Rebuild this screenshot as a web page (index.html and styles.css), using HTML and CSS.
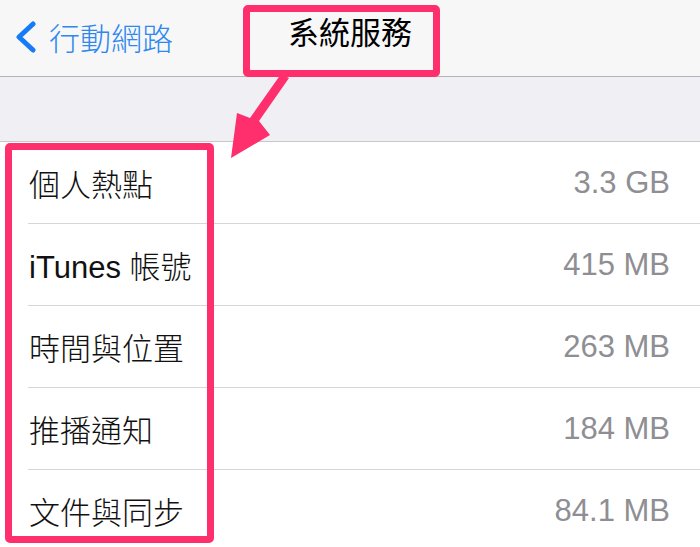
FILE: index.html
```html
<!DOCTYPE html>
<html lang="zh-Hant">
<head>
<meta charset="utf-8">
<title>系統服務</title>
<link rel="stylesheet" href="styles.css">
</head>
<body>
<div class="screen">
  <header class="nav">
    <div class="back">
      <svg class="chev" width="26" height="32" viewBox="0 0 26 32"><path d="M20 3 L6 16 L20 29" fill="none" stroke="#157bf6" stroke-width="5" stroke-linecap="round" stroke-linejoin="round"/></svg>
      <span class="back-label">行動網路</span>
    </div>
    <div class="title">系統服務</div>
  </header>
  <div class="gap"></div>
  <ul class="list">
    <li class="row"><div class="cell"><span class="label">個人熱點</span><span class="value">3.3 GB</span></div></li>
    <li class="row"><div class="cell"><span class="label">iTunes 帳號</span><span class="value">415 MB</span></div></li>
    <li class="row"><div class="cell"><span class="label">時間與位置</span><span class="value">263 MB</span></div></li>
    <li class="row"><div class="cell"><span class="label">推播通知</span><span class="value">184 MB</span></div></li>
    <li class="row"><div class="cell"><span class="label">文件與同步</span><span class="value">84.1 MB</span></div></li>
  </ul>

  <div class="mark mark-title"></div>
  <div class="mark mark-list"></div>
  <svg class="arrow" width="700" height="547" viewBox="0 0 700 547">
    <path d="M281 74 L289 78 L259 121 L270 135 L231 158 L237 113 L250 118 Z" fill="#ff2e6c"/>
  </svg>
</div>
</body>
</html>
```
FILE: styles.css
```css
* { box-sizing: border-box; }
html, body { margin: 0; padding: 0; }
body {
  width: 700px;
  height: 547px;
  overflow: hidden;
  background: #ffffff;
  font-family: "Liberation Sans", "Noto Sans CJK TC", sans-serif;
}
.screen {
  position: relative;
  width: 700px;
  height: 547px;
  overflow: hidden;
}
.nav {
  position: relative;
  height: 77px;
  background: #f7f7f8;
  border-bottom: 1px solid #b4b4b6;
  display: flex;
  align-items: center;
}
.back {
  display: flex;
  align-items: center;
  padding-left: 13px;
  gap: 10px;
  color: #2e88ee;
  font-size: 31px;
  font-weight: 300;
  margin-top: -3px;
}
.chev { display: block; }
.title {
  position: absolute;
  left: 0;
  right: 0;
  top: 14px;
  text-align: center;
  font-size: 31px;
  font-weight: 400;
  color: #000;
  line-height: 40px;
  pointer-events: none;
}
.gap {
  height: 65px;
  background: #efeff4;
  border-bottom: 1px solid #c8c7cc;
}
.list {
  list-style: none;
  margin: 0;
  padding: 0;
}
.row {
  padding-left: 28px;
  height: 82px;
}
.cell {
  height: 82px;
  border-bottom: 1px solid #d6d6d9;
  display: flex;
  align-items: center;
  justify-content: space-between;
  padding-right: 30px;
  padding-left: 1px;
}
.label {
  font-size: 31px;
  font-weight: 300;
  color: #111;
}
.value {
  font-size: 31px;
  color: #8e8e93;
}
.mark {
  position: absolute;
  border: 7px solid #ff2e6c;
  border-radius: 5px;
}
.mark-title {
  left: 243px;
  top: 5px;
  width: 197px;
  height: 72px;
}
.mark-list {
  left: 5px;
  top: 143px;
  width: 209px;
  height: 400px;
}
.arrow {
  position: absolute;
  left: 0;
  top: 0;
  pointer-events: none;
}
```
